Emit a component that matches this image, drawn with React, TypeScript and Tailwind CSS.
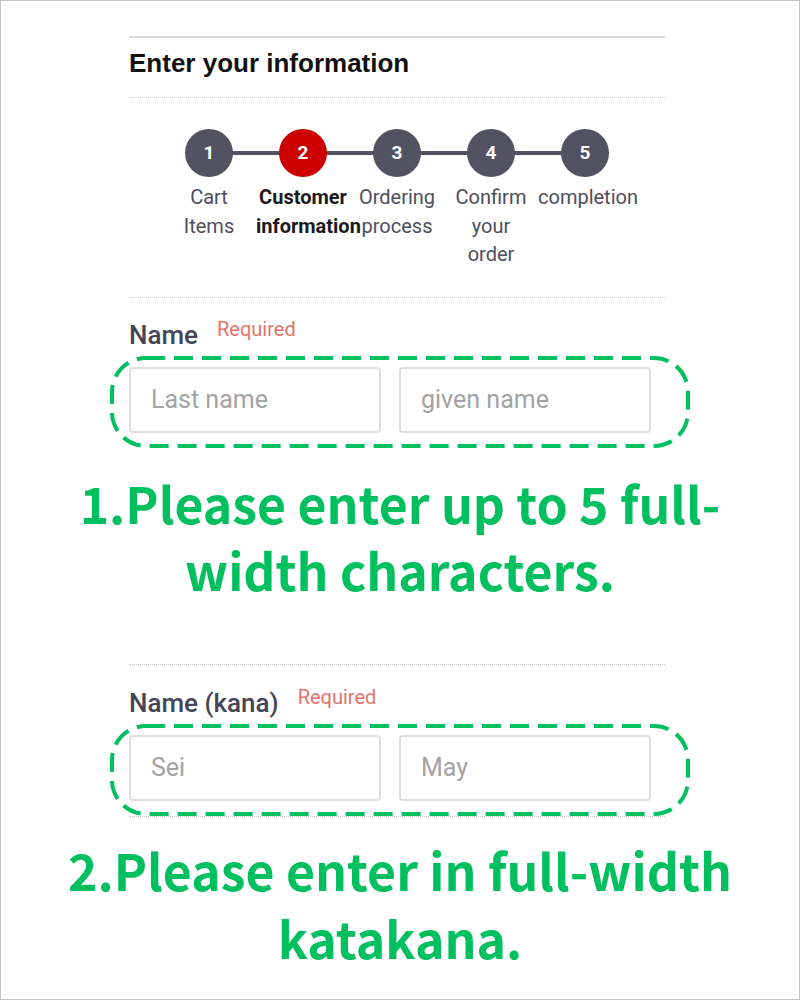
import React from 'react';

const steps = [
  { n: 1, lines: ['Cart', 'Items'] },
  { n: 2, lines: ['Customer', 'information'], active: true },
  { n: 3, lines: ['Ordering', 'process'] },
  { n: 4, lines: ['Confirm', 'your', 'order'] },
  { n: 5, lines: ['completion'] },
];

function DashedBox() {
  return (
    <svg
      className="absolute left-[-19px] top-[-11px] pointer-events-none"
      width="580"
      height="92"
      viewBox="0 0 580 92"
    >
      <rect
        x="2"
        y="2"
        width="576"
        height="88"
        rx="34"
        ry="34"
        fill="none"
        stroke="#00bf5f"
        strokeWidth="4"
        strokeDasharray="19 9"
      />
    </svg>
  );
}

function NameField({ label, first, second }: { label: string; first: string; second: string }) {
  return (
    <div>
      <div className="flex items-start gap-[19px] h-[34px] mb-[15px]">
        <span className="text-[26px] leading-[34px] font-medium text-[#454555] font-['Roboto',sans-serif]">
          {label}
        </span>
        <span className="text-[20px] leading-[22px] text-[#e5736b] font-['Roboto',sans-serif]">
          Required
        </span>
      </div>
      <div className="relative w-[522px] grid grid-cols-2 gap-[18px]">
        <input
          placeholder={first}
          className="h-[66px] border-2 border-[#dedede] rounded-[4px] pl-[20px] text-[25px] font-['Roboto',sans-serif] placeholder:text-[#a3a3a3] outline-none"
        />
        <input
          placeholder={second}
          className="h-[66px] border-2 border-[#dedede] rounded-[4px] pl-[20px] text-[25px] font-['Roboto',sans-serif] placeholder:text-[#a3a3a3] outline-none"
        />
        <DashedBox />
      </div>
    </div>
  );
}

export default function App() {
  return (
    <div className="w-[800px] h-[1000px] border border-[#c4c4c4] bg-white overflow-hidden">
      <div className="ml-[128px] w-[536px] pt-[35px]">
        <div className="border-t-2 border-[#dadada]" />
        <h2 className="mt-[10px] text-[26px] leading-[30px] font-bold text-[#111] font-['Liberation_Sans',Arial,sans-serif]">
          Enter your information
        </h2>
        <div className="mt-[19px] border-t border-dotted border-[#c4c4c4]" />

        {/* Stepper */}
        <div className="mt-[31px] flex justify-center">
          <div className="relative flex">
            <div className="absolute left-[47px] right-[47px] top-[22px] h-[4px] bg-[#525263]" />
            {steps.map((s) => (
              <div key={s.n} className="relative w-[94px] flex flex-col items-center">
                <div
                  className={`w-[48px] h-[48px] rounded-full flex items-center justify-center text-white font-bold text-[19px] font-['Roboto',sans-serif] ${
                    s.active ? 'bg-[#cc0000]' : 'bg-[#525263]'
                  }`}
                >
                  {s.n}
                </div>
                <div
                  className={`mt-[6px] w-[94px] text-center text-[20px] leading-[28.5px] font-['Roboto',sans-serif] ${
                    s.active ? 'font-bold text-[#1a1a1a]' : 'text-[#4e4e5c]'
                  }`}
                >
                  {s.lines.map((l) => (
                    <div key={l} className="whitespace-nowrap">
                      {l}
                    </div>
                  ))}
                </div>
              </div>
            ))}
          </div>
        </div>

        <div className="mt-[28px] border-t border-dotted border-[#c4c4c4]" />
        <div className="mt-[20px]">
          <NameField label="Name" first="Last name" second="given name" />
        </div>
      </div>

      <p className="mt-[36px] text-center text-[50px] leading-[67px] font-bold text-[#00bf5f] font-['Noto_Sans_CJK_JP','Noto_Sans',sans-serif]">
        1.Please enter up to 5 full-
        <br />
        width characters.
      </p>

      <div className="ml-[128px] w-[536px]">
        <div className="mt-[61px] border-t border-dotted border-[#c4c4c4]" />
        <div className="mt-[21px]">
          <NameField label="Name (kana)" first="Sei" second="May" />
        </div>
        <div className="mt-[15px] border-t border-dotted border-[#c4c4c4]" />
      </div>

      <p className="mt-[18px] text-center text-[50px] leading-[68px] font-bold text-[#00bf5f] font-['Noto_Sans_CJK_JP','Noto_Sans',sans-serif]">
        2.Please enter in full-width
        <br />
        katakana.
      </p>
    </div>
  );
}
